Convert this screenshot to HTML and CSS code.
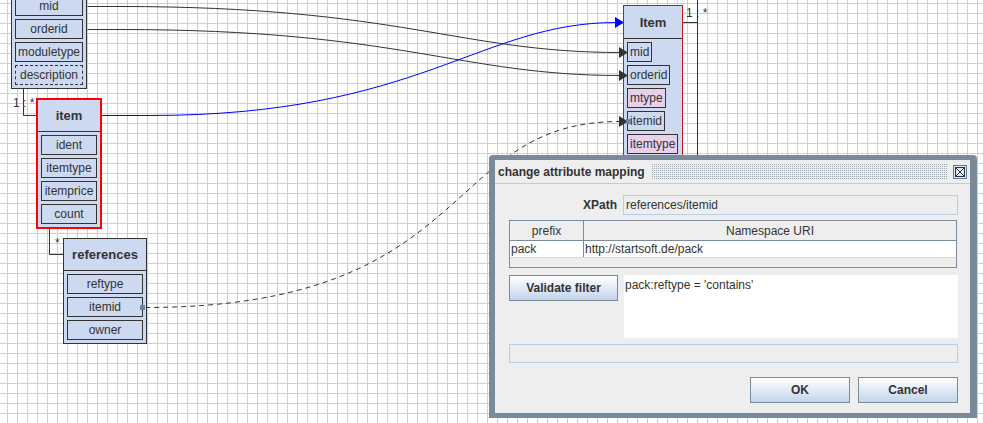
FILE: index.html
```html
<!DOCTYPE html>
<html>
<head>
<meta charset="utf-8">
<title>change attribute mapping</title>
<link rel="stylesheet" href="styles.css">
</head>
<body>
<div class="canvas">
  <svg class="wires" width="983" height="423" viewBox="0 0 983 423">
    <path d="M87.5,6.5 H120 C 400,6.5 460,52.5 620,52.5" class="wire"/>
    <path d="M87.5,29.5 H120 C 400,29.5 460,75.5 620,75.5" class="wire"/>
    <path d="M102,115.5 H150 C 420,115.5 480,22.5 616,22.5" class="wire blue"/>
    <path d="M145,307.5 C 480,307.5 440,121.5 620,121.5" class="wire dashed"/>
    <path d="M23.5,89 V115.5 H36" class="wire"/>
    <path d="M49.5,229 V254.5 H63" class="wire"/>
    <path d="M683,22.5 H697.5 V0 M697.5,22 V160" class="wire"/>
  </svg>

  <div class="node n-module">
    <div class="fields">
      <div class="field">mid</div>
      <div class="field">orderid</div>
      <div class="field">moduletype</div>
      <div class="field dashed">description</div>
    </div>
  </div>

  <div class="node n-item">
    <div class="head">item</div>
    <div class="fields">
      <div class="field">ident</div>
      <div class="field">itemtype</div>
      <div class="field">itemprice</div>
      <div class="field">count</div>
    </div>
  </div>

  <div class="node n-refs">
    <div class="head">references</div>
    <div class="fields">
      <div class="field">reftype</div>
      <div class="field">itemid</div>
      <div class="field">owner</div>
    </div>
  </div>

  <div class="node n-target">
    <div class="head">Item</div>
    <div class="fields left">
      <div class="field">mid</div>
      <div class="field">orderid</div>
      <div class="field pink">mtype</div>
      <div class="field">itemid</div>
      <div class="field pink">itemtype</div>
    </div>
  </div>

  <span class="mult m1">1 : *</span>
  <span class="mult m2">*</span>
  <span class="mult m3">1 : *</span>

  <svg class="heads" width="983" height="423" viewBox="0 0 983 423">
    <polygon points="619,47 628,52.5 619,58" fill="#333"/>
    <polygon points="619,70 628,75.5 619,81" fill="#333"/>
    <polygon points="619,116 628,121.5 619,127" fill="#333"/>
    <polygon points="615,17 624,22.5 615,28" fill="#0000ff"/>
    <rect x="626" y="119" width="5" height="5" fill="#6a84ad"/>
    <rect x="140" y="305" width="5" height="5" fill="#6a84ad"/>
  </svg>

  <div class="dialog">
    <div class="dlg-inner">
      <div class="titlebar">
        <span class="title">change attribute mapping</span>
        <span class="grip"></span>
        <span class="close">
          <svg width="14" height="14" viewBox="0 0 14 14">
            <rect x="0.5" y="0.5" width="13" height="13" fill="#dfe8f4" stroke="#5b7ba6"/>
            <rect x="2.5" y="2.5" width="9" height="9" fill="none" stroke="#333"/>
            <path d="M3,3 L11,11 M11,3 L3,11" stroke="#333" stroke-width="1"/>
          </svg>
        </span>
      </div>
      <div class="content">
        <div class="row2">
          <label class="lbl">XPath</label>
          <div class="tf disabled">references/itemid</div>
        </div>
        <div class="table">
          <div class="thead">
            <div class="th c1">prefix</div>
            <div class="th c2">Namespace URI</div>
          </div>
          <div class="tr">
            <div class="td c1">pack</div>
            <div class="td c2">http://startsoft.de/pack</div>
          </div>
        </div>
        <div class="row2 filter">
          <button class="btn">Validate filter</button>
          <div class="area">pack:reftype = 'contains'</div>
        </div>
        <div class="status"></div>
        <div class="actions">
          <button class="btn wide">OK</button>
          <button class="btn wide">Cancel</button>
        </div>
      </div>
    </div>
  </div>
</div>
</body>
</html>
```

FILE: styles.css
```css
* { box-sizing: border-box; }
html, body { margin: 0; padding: 0; }
body {
  width: 983px;
  height: 423px;
  overflow: hidden;
  font-family: "Liberation Sans", Arial, sans-serif;
  font-size: 12px;
  color: #333;
}
.canvas {
  position: relative;
  width: 983px;
  height: 423px;
  overflow: hidden;
  background-color: #fff;
  background-image:
    linear-gradient(to right, transparent 7px, #dfc4df 7px, #dfc4df 8px, transparent 8px),
    linear-gradient(to bottom, transparent 3px, #dfc4df 3px, #dfc4df 4px, transparent 4px);
  background-size: 10px 10px;
}
.wires, .heads {
  position: absolute;
  left: 0;
  top: 0;
  pointer-events: none;
}
.wire { fill: none; stroke: #333; stroke-width: 1; }
.wire.blue { stroke: #0000ff; }
.wire.dashed { stroke-dasharray: 5 4; }

.node {
  position: absolute;
  background: #cdd9f0;
  border: 1px solid #333;
}
.head {
  height: 32px;
  border-bottom: 1px solid #333;
  display: flex;
  align-items: center;
  justify-content: center;
  font-weight: bold;
  font-size: 13px;
}
.fields {
  display: flex;
  flex-direction: column;
  gap: 3px;
  padding: 3px;
}
.fields.left { align-items: flex-start; }
.field {
  height: 20px;
  border: 1px solid #333;
  display: flex;
  align-items: center;
  justify-content: center;
  white-space: nowrap;
}
.fields.left .field { padding: 0 2px; justify-content: flex-start; }
.field.dashed { border-style: dashed; }
.field.pink { background: #e8d0e8; }

.n-module { left: 11px; top: -8px; width: 76px; }
.n-item { left: 36px; top: 98px; width: 66px; border: 2px solid #f00; }
.n-refs { left: 63px; top: 238px; width: 84px; }
.n-target {
  left: 623px; top: 5px; width: 60px; height: 170px;
  border-color: #c41a1a;
}
.n-target .head { height: 33px; }

.mult {
  position: absolute;
  font-size: 12px;
  line-height: 12px;
  white-space: pre;
  color: #333;
}
.m1 { left: 13px; top: 97px; }
.m2 { left: 55px; top: 237px; }
.m3 { left: 686px; top: 7px; }

/* dialog */
.dialog {
  position: absolute;
  left: 489px;
  top: 155px;
  width: 488px;
  height: 263px;
  background: #7b8a99;
  border-radius: 4px 4px 0 0;
  padding: 5px 7px 5px 6px;
}
.dlg-inner {
  height: 100%;
  background: #eeeeee;
  display: flex;
  flex-direction: column;
}
.titlebar {
  height: 24px;
  border-bottom: 1px solid #b8cfe5;
  display: flex;
  align-items: center;
  padding: 0 3px 0 3px;
  gap: 6px;
}
.title { font-weight: bold; font-size: 12px; white-space: nowrap; }
.grip {
  flex: 1;
  height: 15px;
  background-image: conic-gradient(#9ea5ad 0 25%, transparent 0 100%);
  background-size: 2px 2px;
}
.close { width: 14px; height: 14px; display: block; }
.close svg { display: block; }

.content {
  flex: 1;
  padding: 11px 12px 10px 14px;
  display: flex;
  flex-direction: column;
}
.row2 {
  display: grid;
  grid-template-columns: 109px 1fr;
  column-gap: 5px;
}
.lbl {
  font-weight: bold;
  font-size: 12px;
  text-align: right;
  align-self: center;
  padding-right: 1px;
}
.tf {
  height: 20px;
  border: 1px solid #b8cfe5;
  display: flex;
  align-items: center;
  padding-left: 2px;
}
.tf.disabled { background: #eeeeee; }

.table {
  margin-top: 5px;
  margin-right: 1px;
  height: 48px;
  border: 1px solid #7a8a99;
  background: #eeeeee;
}
.thead, .tr {
  display: grid;
  grid-template-columns: 74px 1fr;
}
.thead { height: 20px; border-bottom: 1px solid #7a8a99; }
.th {
  display: flex;
  align-items: center;
  justify-content: center;
}
.th.c1 { border-right: 1px solid #7a8a99; }
.tr { height: 17px; background: #fff; border-bottom: 1px solid #d8d8d8; }
.td {
  display: flex;
  align-items: center;
  padding-left: 1px;
}
.td.c1 { border-right: 1px solid #7a8a99; }

.filter { margin-top: 7px; height: 63px; column-gap: 6px; }
.btn {
  font-family: "Liberation Sans", Arial, sans-serif;
  font-size: 12px;
  font-weight: bold;
  color: #333;
  border: 1px solid #7a8a99;
  background: linear-gradient(to bottom, #ffffff 0%, #eef3fa 30%, #c3d4ea 100%);
  height: 26px;
  padding: 0;
  margin: 0;
}
.area {
  background: #fff;
  padding: 3px 1px;
  white-space: nowrap;
}
.status {
  margin-top: 6px;
  height: 19px;
  border: 1px solid #b8cfe5;
}
.actions {
  margin-top: 14px;
  display: flex;
  justify-content: flex-end;
  gap: 8px;
}
.btn.wide { width: 100px; }
```
